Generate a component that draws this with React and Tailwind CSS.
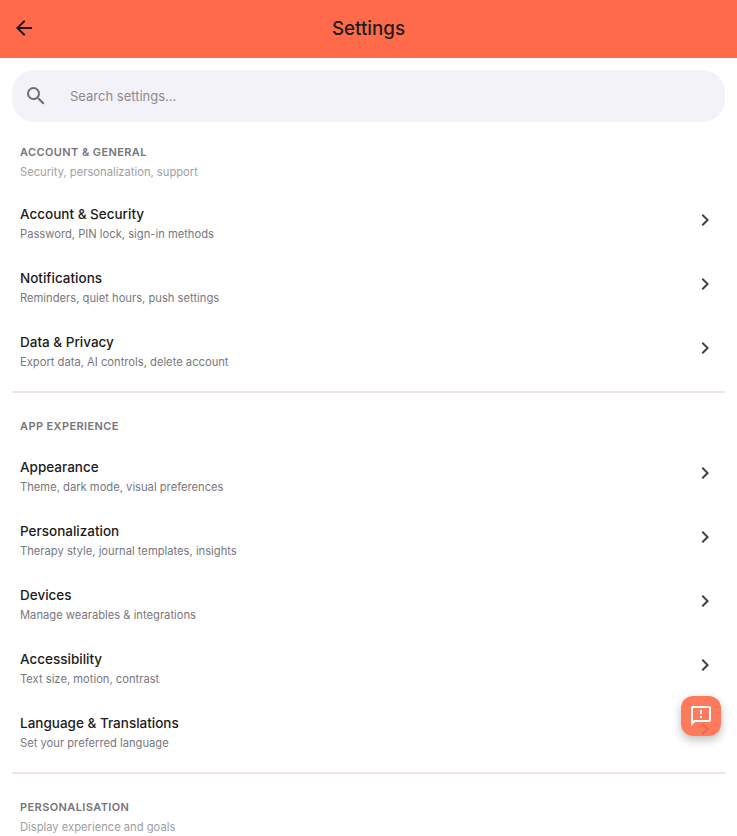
import { MdArrowBack, MdSearch, MdChevronRight, MdOutlineFeedback } from 'react-icons/md';

const accountRows = [
  { title: 'Account & Security', sub: 'Password, PIN lock, sign-in methods' },
  { title: 'Notifications', sub: 'Reminders, quiet hours, push settings' },
  { title: 'Data & Privacy', sub: 'Export data, AI controls, delete account' },
];

const appRows = [
  { title: 'Appearance', sub: 'Theme, dark mode, visual preferences' },
  { title: 'Personalization', sub: 'Therapy style, journal templates, insights' },
  { title: 'Devices', sub: 'Manage wearables & integrations' },
  { title: 'Accessibility', sub: 'Text size, motion, contrast' },
  { title: 'Language & Translations', sub: 'Set your preferred language' },
];

const SectionHeader = ({ label, sub }) => (
  <div className="px-2">
    <p className="h-5 text-[11px] leading-5 font-semibold tracking-[0.4px] text-[#77757a]">{label}</p>
    {sub && <p className="h-5 text-[11.2px] leading-5 text-[#a09ea3]">{sub}</p>}
  </div>
);

const SettingRow = ({ title, sub }) => (
  <div className="h-16 pl-2 pr-[8px] flex items-center justify-between">
    <div className="pt-2">
      <p className="text-[13.5px] leading-5 font-medium text-[#1d1b20]">{title}</p>
      <p className="text-[11.2px] leading-5 text-[#79777d]">{sub}</p>
    </div>
    <MdChevronRight size={24} className="text-[#483f40]" />
  </div>
);

export default function App() {
  return (
    <div className="relative h-[836px] overflow-hidden bg-white font-['Inter',sans-serif]">
      <header className="h-[58px] bg-[#ff6b4a] relative flex items-center justify-center">
        <MdArrowBack size={24} className="absolute left-3 top-4 text-[#1d1b20]" />
        <h1 className="text-[18.8px] font-medium text-[#1d1b20]">Settings</h1>
      </header>

      <div className="px-3">
        <div className="mt-3 h-[52px] rounded-[22px] bg-[#f4f2f9] flex items-center pl-3">
          <MdSearch size={24} className="text-[#6f6d72]" />
          <span className="ml-[22px] pt-0.5 text-[13px] text-[#8b898e]">Search settings...</span>
        </div>

        <div className="pt-5">
          <SectionHeader label="ACCOUNT & GENERAL" sub="Security, personalization, support" />
          <div className="mt-1.5">
            {accountRows.map((row) => (
              <SettingRow key={row.title} {...row} />
            ))}
          </div>
        </div>

        <div className="mt-[11px] h-0.5 bg-[#efe4e3]" />

        <div className="pt-[23px]">
          <SectionHeader label="APP EXPERIENCE" />
          <div className="mt-[5px]">
            {appRows.map((row) => (
              <SettingRow key={row.title} {...row} />
            ))}
          </div>
        </div>

        <div className="mt-[11px] h-0.5 bg-[#efe4e3]" />

        <div className="pt-[23px]">
          <SectionHeader label="PERSONALISATION" sub="Display experience and goals" />
        </div>
      </div>

      <button className="absolute left-[681px] top-[696px] w-10 h-10 rounded-xl bg-[#ff6b4a]/90 flex items-center justify-center shadow-[0_4px_10px_rgba(0,0,0,0.25)]">
        <MdOutlineFeedback size={24} className="text-white" />
      </button>
    </div>
  );
}
